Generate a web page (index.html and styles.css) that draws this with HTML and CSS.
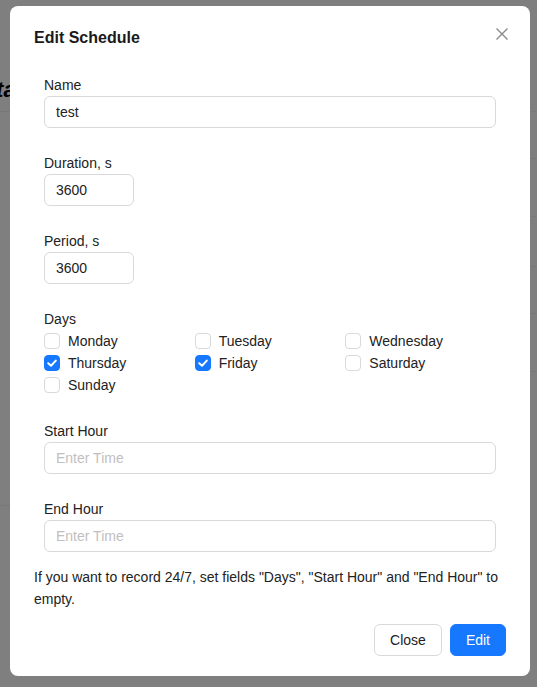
FILE: index.html
```html
<!DOCTYPE html>
<html>
<head>
<meta charset="utf-8">
<link rel="stylesheet" href="styles.css">
</head>
<body>
<div class="page">
  <div class="page-head"><span class="page-title">Data</span></div>
  <div class="page-body">
    <div class="side">
      <div class="side-block"></div>
    </div>
    <div class="table">
      <div class="trow r1"></div>
      <div class="trow r2"></div>
      <div class="trow r3"></div>
      <div class="trow r4"></div>
      <div class="trow r5"></div>
    </div>
  </div>
</div>
<div class="backdrop"></div>
<div class="modal">
  <div class="modal-header">
    <div class="modal-title">Edit Schedule</div>
    <button class="close-x" aria-label="Close">
      <svg width="14" height="14" viewBox="0 0 14 14"><path d="M1.5 1.5 L12.5 12.5 M12.5 1.5 L1.5 12.5" stroke="#8a8a8a" stroke-width="1.4" fill="none"/></svg>
    </button>
  </div>
  <form class="form">
    <div class="group">
      <label class="label">Name</label>
      <input class="input" type="text" value="test">
    </div>
    <div class="group">
      <label class="label">Duration, s</label>
      <input class="input short" type="text" value="3600">
    </div>
    <div class="group">
      <label class="label">Period, s</label>
      <input class="input short" type="text" value="3600">
    </div>
    <div class="group">
      <label class="label">Days</label>
      <div class="days">
        <div class="day"><span class="cb"></span>Monday</div>
        <div class="day"><span class="cb"></span>Tuesday</div>
        <div class="day"><span class="cb"></span>Wednesday</div>
        <div class="day"><span class="cb on"><svg width="16" height="16" viewBox="0 0 16 16"><path d="M4.2 8.2 L7 10.8 L11.8 5.6" stroke="#fff" stroke-width="2" fill="none" stroke-linecap="round" stroke-linejoin="round"/></svg></span>Thursday</div>
        <div class="day"><span class="cb on"><svg width="16" height="16" viewBox="0 0 16 16"><path d="M4.2 8.2 L7 10.8 L11.8 5.6" stroke="#fff" stroke-width="2" fill="none" stroke-linecap="round" stroke-linejoin="round"/></svg></span>Friday</div>
        <div class="day"><span class="cb"></span>Saturday</div>
        <div class="day"><span class="cb"></span>Sunday</div>
      </div>
    </div>
    <div class="group">
      <label class="label">Start Hour</label>
      <input class="input" type="text" placeholder="Enter Time">
    </div>
    <div class="group last">
      <label class="label">End Hour</label>
      <input class="input" type="text" placeholder="Enter Time">
    </div>
  </form>
  <p class="note">If you want to record 24/7, set fields "Days", "Start Hour" and "End Hour" to empty.</p>
  <div class="footer">
    <button class="btn">Close</button>
    <button class="btn primary">Edit</button>
  </div>
</div>
</body>
</html>
```
FILE: styles.css
```css
* { box-sizing: border-box; }
html, body { margin: 0; padding: 0; }
body {
  width: 537px;
  height: 687px;
  overflow: hidden;
  background: #fff;
  font-family: "Liberation Sans", Arial, sans-serif;
  font-size: 14px;
  color: #222;
}
.page { width: 537px; height: 687px; }
.page-head {
  height: 112px;
  border-bottom: 1px solid #f0f0f0;
  padding-top: 76px;
}
.page-title {
  display: block;
  margin-left: -32px;
  font-size: 22px;
  font-weight: bold;
  font-style: italic;
  color: #000;
  line-height: 28px;
}
.page-body { display: flex; }
.side { width: 100px; }
.side-block { height: 394px; border-bottom: 1px solid #f0f0f0; }
.table { flex: 1; }
.trow { border-bottom: 1px solid #f0f0f0; }
.r1 { height: 47px; }
.r2 { height: 58px; }
.r3 { height: 50px; }
.r4 { height: 47px; }
.r5 { height: 58px; }

.backdrop {
  position: fixed;
  inset: 0;
  background: rgba(0, 0, 0, 0.5);
}
.modal {
  position: absolute;
  top: 6px;
  left: 10px;
  width: 520px;
  height: 670px;
  background: #fff;
  border-radius: 8px;
  padding: 20px 24px;
}
.modal-header {
  display: flex;
  justify-content: space-between;
  align-items: flex-start;
  height: 24px;
}
.modal-title {
  font-size: 16px;
  font-weight: bold;
  line-height: 24px;
  color: #1a1a1a;
}
.close-x {
  border: 0;
  background: none;
  padding: 0;
  margin: 1px -3px 0 0;
  width: 14px;
  height: 14px;
  display: flex;
}
.form {
  margin: 25px 0 0 0;
  padding: 0 10px;
}
.group { margin-bottom: 25px; }
.group.last { margin-bottom: 0; }
.label {
  display: block;
  line-height: 20px;
  margin-bottom: 1px;
  color: #222;
}
.input {
  display: block;
  width: 100%;
  height: 32px;
  border: 1px solid #d9d9d9;
  border-radius: 6px;
  padding: 0 11px;
  font-family: inherit;
  font-size: 14px;
  color: #222;
  background: #fff;
  outline: none;
}
.input.short { width: 90px; }
.input::placeholder { color: #bfbfbf; }
.days {
  display: grid;
  grid-template-columns: repeat(3, 1fr);
}
.day {
  display: flex;
  align-items: center;
  height: 22px;
  line-height: 22px;
  color: #222;
}
.cb {
  width: 16px;
  height: 16px;
  border: 1px solid #d9d9d9;
  border-radius: 4px;
  margin-right: 8px;
  background: #fff;
  display: flex;
  align-items: center;
  justify-content: center;
}
.cb.on {
  background: #1677ff;
  border-color: #1677ff;
}
.cb svg { flex: none; }
.note {
  margin: 14px 0 0 0;
  line-height: 22px;
  color: #222;
}
.footer {
  display: flex;
  justify-content: flex-end;
  gap: 8px;
  margin-top: 14px;
}
.btn {
  height: 32px;
  padding: 0 15px;
  border-radius: 6px;
  border: 1px solid #d9d9d9;
  background: #fff;
  font-family: inherit;
  font-size: 14px;
  color: #222;
}
.btn.primary {
  background: #1677ff;
  border-color: #1677ff;
  color: #fff;
}
```
